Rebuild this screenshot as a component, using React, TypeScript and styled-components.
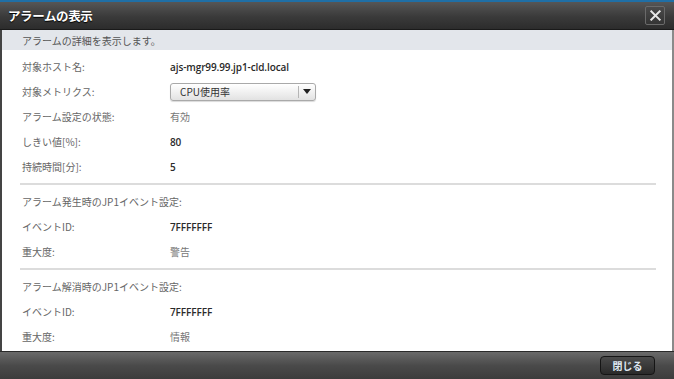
import React from 'react'
import styled, { createGlobalStyle } from 'styled-components'

const GlobalStyle = createGlobalStyle`
  html, body {
    margin: 0;
    padding: 0;
    background: #ffffff;
  }
  body {
    font-family: "Noto Sans CJK JP", "Noto Sans", "Liberation Sans", sans-serif;
  }
`

interface Field {
  label: string
  value?: string
  muted?: boolean
  select?: boolean
}

const hostFields: Field[] = [
  { label: '対象ホスト名:', value: 'ajs-mgr99.99.jp1-cld.local' },
  { label: '対象メトリクス:', value: 'CPU使用率', select: true },
  { label: 'アラーム設定の状態:', value: '有効', muted: true },
  { label: 'しきい値[%]:', value: '80' },
  { label: '持続時間[分]:', value: '5' },
]

const raiseFields: Field[] = [
  { label: 'アラーム発生時のJP1イベント設定:' },
  { label: 'イベントID:', value: '7FFFFFFF' },
  { label: '重大度:', value: '警告', muted: true },
]

const clearFields: Field[] = [
  { label: 'アラーム解消時のJP1イベント設定:' },
  { label: 'イベントID:', value: '7FFFFFFF' },
  { label: '重大度:', value: '情報', muted: true },
]

const FieldRows: React.FC<{ fields: Field[] }> = ({ fields }) => (
  <>
    {fields.map((f, i) => (
      <Row key={i}>
        <Label>{f.label}</Label>
        {f.select ? (
          <Select>
            <SelectText>{f.value}</SelectText>
            <SelectArrow>
              <svg width="8" height="5" viewBox="0 0 8 5">
                <path d="M0 0 L8 0 L4 5 Z" fill="#222" />
              </svg>
            </SelectArrow>
          </Select>
        ) : (
          f.value && <Value $muted={f.muted}>{f.value}</Value>
        )}
      </Row>
    ))}
  </>
)

const App: React.FC = () => {
  return (
    <>
      <GlobalStyle />
      <Dialog>
        <Header>
          <Title>アラームの表示</Title>
          <CloseButton aria-label="close">
            <svg width="11" height="11" viewBox="0 0 12 12">
              <path
                d="M1.5 1.5 L10.5 10.5 M10.5 1.5 L1.5 10.5"
                stroke="#e8e8e8"
                strokeWidth="2.2"
                strokeLinecap="square"
              />
            </svg>
          </CloseButton>
        </Header>
        <Description>
          <DescText>アラームの詳細を表示します。</DescText>
        </Description>
        <Body>
          <FieldRows fields={hostFields} />
          <Divider />
          <FieldRows fields={raiseFields} />
          <Divider />
          <FieldRows fields={clearFields} />
        </Body>
        <Footer>
          <FooterButton>閉じる</FooterButton>
        </Footer>
      </Dialog>
    </>
  )
}

export default App

const Dialog = styled.div`
  width: 674px;
  height: 379px;
  display: flex;
  flex-direction: column;
  box-sizing: border-box;
  border-top: 2px solid #1f6fa6;
  background: #ffffff;
  overflow: hidden;
`

const Header = styled.div`
  height: 27px;
  flex-shrink: 0;
  display: flex;
  align-items: center;
  justify-content: space-between;
  padding: 0 9px 0 8px;
  background: linear-gradient(#565656, #3a3a3a 55%, #2c2c2c);
  border-bottom: 1px solid #1a1a1a;
`

const Title = styled.div`
  color: #ffffff;
  font-size: 12.5px;
  font-weight: bold;
  letter-spacing: -0.4px;
  text-shadow: 0 1px 1px #000;
`

const CloseButton = styled.div`
  width: 20px;
  height: 19px;
  box-sizing: border-box;
  display: flex;
  align-items: center;
  justify-content: center;
  border: 1px solid #6a6a6a;
  border-radius: 2px;
  background: linear-gradient(#4a4a4a, #343434);
`

const Description = styled.div`
  height: 20px;
  flex-shrink: 0;
  display: flex;
  align-items: center;
  background: #e3e6eb;
  border-left: 2px solid #444;
  border-right: 2px solid #8a8a8a;
`

const DescText = styled.span`
  margin-left: 20px;
  color: #555;
  font-size: 10px;
`

const Body = styled.div`
  flex: 1;
  padding: 4px 0 0 0;
  border-left: 2px solid #444;
  border-right: 2px solid #8a8a8a;
  display: flex;
  flex-direction: column;
`

const Row = styled.div`
  height: 25px;
  flex-shrink: 0;
  display: flex;
  align-items: center;
  padding-left: 20px;
  font-size: 10px;
`

const Label = styled.div`
  width: 148px;
  flex-shrink: 0;
  color: #666;
  white-space: nowrap;
`

const Value = styled.div<{ $muted?: boolean }>`
  color: ${(p) => (p.$muted ? '#777' : '#2a2a2a')};
  font-family: "Open Sans", "Noto Sans CJK JP", sans-serif;
  font-weight: ${(p) => (p.$muted ? 'normal' : 600)};
  letter-spacing: -0.1px;
`

const Select = styled.div`
  width: 146px;
  height: 18px;
  box-sizing: border-box;
  display: flex;
  align-items: center;
  border: 1px solid #a9a9a9;
  border-radius: 3px;
  background: linear-gradient(#ffffff, #eeeeee 60%, #e2e2e2);
  box-shadow: 0 1px 1px rgba(0, 0, 0, 0.15);
`

const SelectText = styled.div`
  flex: 1;
  padding-left: 9px;
  color: #333;
  font-size: 10px;
`

const SelectArrow = styled.div`
  width: 15px;
  height: 12px;
  display: flex;
  align-items: center;
  justify-content: center;
  border-left: 1px solid #b5b5b5;
  margin-right: 1px;
`

const Divider = styled.div`
  height: 2px;
  flex-shrink: 0;
  margin: 4px 16px 4px 18px;
  background: #dcdcdc;
`

const Footer = styled.div`
  height: 27px;
  flex-shrink: 0;
  display: flex;
  align-items: center;
  justify-content: flex-end;
  padding-right: 19px;
  background: linear-gradient(#6a6a6a, #4a4a4a 50%, #3c3c3c);
  border-top: 1px solid #2a2a2a;
`

const FooterButton = styled.div`
  width: 55px;
  height: 19px;
  box-sizing: border-box;
  display: flex;
  align-items: center;
  justify-content: center;
  border: 1px solid #151515;
  border-radius: 4px;
  background: linear-gradient(#4a4a4a, #2a2a2a);
  color: #dfe8f2;
  font-size: 10px;
  font-weight: bold;
`
